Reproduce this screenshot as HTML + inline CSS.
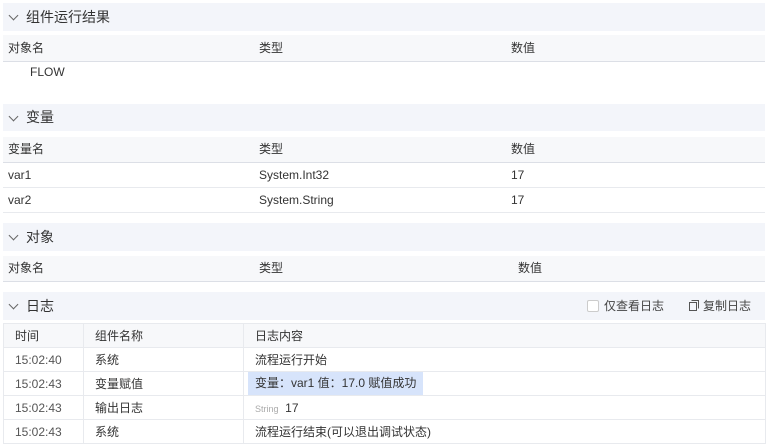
<!DOCTYPE html>
<html><head><meta charset="utf-8"><style>
body{margin:0;width:768px;height:448px;background:#fff;font-family:"Liberation Sans","Noto Sans CJK SC",sans-serif;font-size:12px;color:#333;position:relative;overflow:hidden}
.a{position:absolute}
.sec{position:absolute;left:3px;width:762px;background:#f3f5fa;font-size:14px;color:#333}
.sec span{position:absolute;left:23px}
.chev{position:absolute;left:7px;width:6px;height:6px;border-right:1px solid #666;border-bottom:1px solid #666;transform:rotate(45deg)}
.th{position:absolute;left:3px;width:762px;background:#f7f8fa;border-bottom:1px solid #dcdfe6}
.tr{position:absolute;left:3px;width:762px;border-bottom:1px solid #e8eaee}
.c{position:absolute;top:0}
table{position:absolute;left:3px;top:323px;width:763px;border-collapse:collapse}
td{border:1px solid #e8eaee;height:23px;padding:0 0 0 11px;font-size:12px;color:#333}
td.t{color:#555}
tr.h td{background:#f7f8fa}
</style></head><body>
<div class="sec" style="top:3px;height:28px;line-height:28px"><i class="chev" style="top:9px"></i><span>组件运行结果</span></div>
<div class="th" style="top:35px;height:26px;line-height:26px"><span class="c" style="left:5px">对象名</span><span class="c" style="left:256px">类型</span><span class="c" style="left:508px">数值</span></div>
<div class="a" style="left:30px;top:64px;line-height:16px">FLOW</div>

<div class="sec" style="top:104px;height:27px;line-height:27px"><i class="chev" style="top:9px"></i><span>变量</span></div>
<div class="th" style="top:137px;height:25px;line-height:25px"><span class="c" style="left:5px">变量名</span><span class="c" style="left:256px">类型</span><span class="c" style="left:508px">数值</span></div>
<div class="tr" style="top:163px;height:24px;line-height:24px"><span class="c" style="left:5px">var1</span><span class="c" style="left:256px">System.Int32</span><span class="c" style="left:508px">17</span></div>
<div class="tr" style="top:188px;height:24px;line-height:24px"><span class="c" style="left:5px">var2</span><span class="c" style="left:256px">System.String</span><span class="c" style="left:508px">17</span></div>

<div class="sec" style="top:223px;height:28px;line-height:28px"><i class="chev" style="top:9px"></i><span>对象</span></div>
<div class="th" style="top:256px;height:25px;line-height:25px"><span class="c" style="left:5px">对象名</span><span class="c" style="left:256px">类型</span><span class="c" style="left:515px">数值</span></div>

<div class="sec" style="top:292px;height:28px;line-height:28px"><i class="chev" style="top:9px"></i><span>日志</span>
<span style="left:584px;font-size:12px;color:#444"><i style="display:inline-block;width:10px;height:10px;border:1px solid #ccc;border-radius:2px;background:#fff;vertical-align:-2px;margin-right:5px"></i>仅查看日志</span>
<span style="left:686px;font-size:12px;color:#444"><svg width="10" height="11" style="vertical-align:-1px;margin-right:4px" viewBox="0 0 10 11"><rect x="0.5" y="2.5" width="7" height="8" fill="none" stroke="#555"/><path d="M2.5 .5H9.5V8.5" fill="none" stroke="#555"/></svg>复制日志</span></div>
<table>
<tr class="h"><td style="width:68px">时间</td><td style="width:148px">组件名称</td><td>日志内容</td></tr>
<tr><td class="t">15:02:40</td><td>系统</td><td>流程运行开始</td></tr>
<tr><td class="t">15:02:43</td><td>变量赋值</td><td style="padding-left:4px"><span style="background:#d7e4fb;display:inline-block;height:23px;line-height:23px;padding:0 7px">变量：var1 值：17.0 赋值成功</span></td></tr>
<tr><td class="t">15:02:43</td><td>输出日志</td><td><span style="font-size:9px;color:#aaa">String</span>&nbsp; 17</td></tr>
<tr><td class="t">15:02:43</td><td>系统</td><td>流程运行结束(可以退出调试状态)</td></tr>
</table>
</body></html>
